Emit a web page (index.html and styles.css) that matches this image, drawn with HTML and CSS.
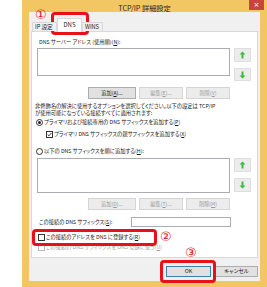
FILE: index.html
```html
<!DOCTYPE html>
<html lang="ja">
<head>
<meta charset="utf-8">
<link rel="stylesheet" href="styles.css">
</head>
<body>
<div class="window">
  <div class="titlebar">
    <span class="title">TCP/IP 詳細設定</span>
    <span class="close">×</span>
  </div>
  <div class="client">
    <div class="tabs">
      <div class="tab">IP 設定</div>
      <div class="tab active">DNS</div>
      <div class="tab">WINS</div>
    </div>
    <div class="panel">
      <div class="label l1">DNS サーバー アドレス (使用順)(<u>N</u>):</div>
      <div class="listrow r1">
        <div class="listbox lb1"></div>
        <div class="arrows">
          <div class="abtn"><svg width="7" height="8" viewBox="0 0 7 8"><path d="M3.5 0.5 L6.5 3.5 H4.5 V7.5 H2.5 V3.5 H0.5 Z" fill="#3dbb3d"/></svg></div>
          <div class="abtn"><svg width="7" height="8" viewBox="0 0 7 8"><path d="M3.5 7.5 L6.5 4.5 H4.5 V0.5 H2.5 V4.5 H0.5 Z" fill="#3dbb3d"/></svg></div>
        </div>
      </div>
      <div class="btnrow b1">
        <div class="btn wide">追加(<u>A</u>)...</div>
        <div class="btn dis">編集(<u>E</u>)...</div>
        <div class="btn dis">削除(<u>V</u>)</div>
      </div>
      <div class="para">非修飾名の解決に使用するオプションを選択してください。以下の設定は TCP/IP<br>が使用可能になっている接続すべてに適用されます:</div>
      <div class="opt radio1"><span class="radio on"></span>プライマリおよび接続専用の DNS サフィックスを追加する(<u>P</u>)</div>
      <div class="opt check1"><span class="check on"><svg width="5" height="5" viewBox="0 0 5 5"><path d="M0.7 2.5 L2 3.8 L4.3 1" fill="none" stroke="#222" stroke-width="0.9"/></svg></span>プライマリ DNS サフィックスの親サフィックスを追加する(<u>X</u>)</div>
      <div class="opt radio2"><span class="radio"></span>以下の DNS サフィックスを順に追加する(<u>H</u>):</div>
      <div class="listrow r2">
        <div class="listbox lb2"></div>
        <div class="arrows">
          <div class="abtn"><svg width="7" height="8" viewBox="0 0 7 8"><path d="M3.5 0.5 L6.5 3.5 H4.5 V7.5 H2.5 V3.5 H0.5 Z" fill="#3dbb3d"/></svg></div>
          <div class="abtn"><svg width="7" height="8" viewBox="0 0 7 8"><path d="M3.5 7.5 L6.5 4.5 H4.5 V0.5 H2.5 V4.5 H0.5 Z" fill="#3dbb3d"/></svg></div>
        </div>
      </div>
      <div class="btnrow b2">
        <div class="btn wide dis">追加(<u>D</u>)...</div>
        <div class="btn dis">編集(<u>T</u>)...</div>
        <div class="btn dis">削除(<u>M</u>)</div>
      </div>
      <div class="suffix">
        <span class="slabel">この接続の DNS サフィックス(<u>S</u>):</span>
        <div class="textbox"></div>
      </div>
      <div class="opt reg"><span class="check"></span>この接続のアドレスを DNS に登録する(<u>R</u>)</div>
      <div class="opt gray"><span class="check dim"></span>この接続の DNS サフィックスを DNS 登録に使う(<u>U</u>)</div>
    </div>
    <div class="footer">
      <div class="fbtn ok">OK</div>
      <div class="fbtn">キャンセル</div>
    </div>
  </div>
  <div class="mark m-tab"></div>
  <div class="mark m-reg"></div>
  <div class="mark m-ok"></div>
  <span class="num n1">①</span>
  <span class="num n2">②</span>
  <span class="num n3">③</span>
</div>
</body>
</html>
```

FILE: styles.css
```css
html, body {
  margin: 0;
  padding: 0;
  background: #ffffff;
}
body {
  width: 267px;
  height: 287px;
  overflow: hidden;
  font-family: "Noto Sans CJK JP", "Noto Sans", sans-serif;
  font-feature-settings: "palt";
  color: #1a1a1a;
}
u { text-decoration: underline; text-underline-offset: 0.5px; }
.window {
  position: relative;
  margin-left: 22px;
  width: 245px;
  height: 287px;
  background: #f2c662;
  display: flex;
  flex-direction: column;
  box-sizing: border-box;
  padding: 0 7px 6px 7px;
}
.titlebar {
  height: 12px;
  position: relative;
  display: flex;
  align-items: center;
  justify-content: center;
}
.title {
  font-size: 7.2px;
  color: #2a2a2a;
  line-height: 12px;
  margin-top: 3px;
  font-feature-settings: normal;
}
.close {
  position: absolute;
  right: -4px;
  top: 0;
  width: 15px;
  height: 10px;
  background: #c8453c;
  color: #fff;
  font-size: 7px;
  line-height: 10px;
  text-align: center;
  font-family: "DejaVu Sans", sans-serif;
}
.client {
  flex: 1;
  background: #f0f0f0;
  display: flex;
  flex-direction: column;
  padding: 0 2px 0 2px;
}
.tabs {
  display: flex;
  height: 9px;
  margin-top: 10px;
  padding-left: 1px;
  align-items: flex-end;
  position: relative;
  z-index: 2;
}
.tab {
  height: 9px;
  box-sizing: border-box;
  border: 1px solid #d9d9d9;
  border-bottom: none;
  background: #f0f0f0;
  font-size: 5.6px;
  line-height: 8px;
  padding: 0 2px;
  color: #222;
  white-space: nowrap;
  overflow: hidden;
}
.tab:first-child { width: 25px; }
.tab.active {
  width: 25px;
  height: 14px;
  margin-bottom: -1px;
  background: #fff;
  text-align: center;
  line-height: 11px;
  font-size: 6px;
}
.tab:last-child { width: 21px; }
.panel {
  height: 227px;
  box-sizing: border-box;
  background: #fff;
  border: 1px solid #d9d9d9;
  display: flex;
  flex-direction: column;
  font-size: 5.3px;
  line-height: 8px;
}
.label { margin: 6px 0 0 7px; height: 8px; }
.listrow { display: flex; margin-left: 5px; }
.r1 { margin-top: 2px; }
.r2 { margin-top: 3px; }
.listbox {
  width: 193px;
  box-sizing: border-box;
  border: 1px solid #abadb3;
  background: #fff;
}
.lb1 { height: 28px; }
.lb2 { height: 35px; }
.arrows {
  display: flex;
  flex-direction: column;
  gap: 6px;
  margin-left: 4px;
}
.abtn {
  width: 17px;
  height: 14px;
  background: #ececec;
  border: 1px solid #dedede;
  box-sizing: border-box;
  display: flex;
  align-items: center;
  justify-content: center;
}
.r1 .abtn:last-child { height: 13px; }
.btnrow {
  display: flex;
  gap: 3px;
  margin-left: 56px;
  width: 142px;
}
.b1 { margin-top: 6px; }
.b2 { margin-top: 5px; }
.btn {
  width: 44px;
  height: 12px;
  box-sizing: border-box;
  background: #e1e1e1;
  border: 1px solid #adadad;
  text-align: center;
  line-height: 10px;
  font-size: 5.2px;
  color: #1a1a1a;
}
.btn.wide { width: 48px; }
.btn.dis {
  background: #ececec;
  border-color: #d4d4d4;
  color: #9a9a9a;
}
.para {
  margin: 4px 0 0 3px;
  line-height: 7px;
  white-space: nowrap;
}
.opt {
  display: flex;
  align-items: center;
  white-space: nowrap;
  height: 8px;
}
.radio1 { margin: 1px 0 0 4px; }
.check1 { margin: 4px 0 0 14px; }
.radio2 { margin: 9px 0 0 4px; }
.radio {
  width: 5px;
  height: 5px;
  border: 1px solid #333;
  border-radius: 50%;
  margin-right: 1px;
  position: relative;
  box-sizing: content-box;
}
.radio.on::after {
  content: "";
  position: absolute;
  left: 1px; top: 1px;
  width: 3px; height: 3px;
  border-radius: 50%;
  background: #222;
}
.check {
  width: 5px;
  height: 5px;
  border: 1px solid #333;
  margin-right: 1px;
  display: flex;
  align-items: center;
  justify-content: center;
  background: #fff;
}
.check.dim { border-color: #bbb; }
.suffix {
  display: flex;
  align-items: center;
  margin: 7px 0 0 7px;
  height: 10px;
}
.slabel { width: 92px; }
.textbox {
  width: 100px;
  height: 10px;
  box-sizing: border-box;
  border: 1px solid #abadb3;
}
.reg { margin: 6px 0 0 6px; }
.gray { margin: 2px 0 0 6px; color: #a0a0a0; }
.footer {
  display: flex;
  justify-content: flex-end;
  gap: 4px;
  margin-top: 8px;
  padding-right: 0;
}
.fbtn {
  width: 43px;
  height: 11px;
  box-sizing: border-box;
  background: #e1e1e1;
  border: 1px solid #adadad;
  font-size: 5.4px;
  line-height: 9px;
  text-align: center;
}
.fbtn.ok { width: 45px; border-color: #3c7fb1; }
.mark {
  position: absolute;
  border: 3px solid #e8101a;
  border-radius: 4px;
  box-sizing: border-box;
}
.m-tab { left: 29px; top: 12px; width: 38px; height: 23px; }
.m-reg { left: 10px; top: 229px; width: 125px; height: 17px; }
.m-ok { left: 138px; top: 260px; width: 56px; height: 23px; }
.num {
  position: absolute;
  color: #e8101a;
  font-size: 13px;
  line-height: 13px;
  font-family: "DejaVu Sans", sans-serif;
}
.n1 { left: 13px; top: 8px; }
.n2 { left: 138px; top: 230px; }
.n3 { left: 163px; top: 246px; }
```
